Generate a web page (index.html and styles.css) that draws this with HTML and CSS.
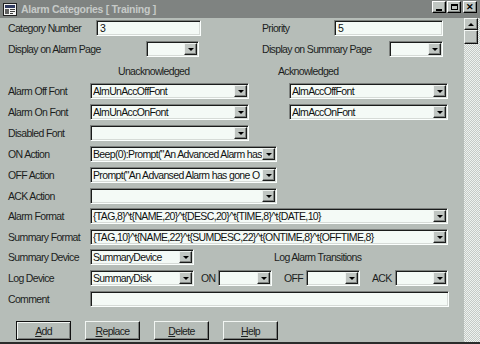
FILE: index.html
```html
<!DOCTYPE html>
<html lang="en">

<head>
  <meta charset="UTF-8" />
  <title>Alarm Categories [ Training ]</title>
  <link rel="stylesheet" href="styles.css">
</head>

<body>
  <div class="window">
    <div class="titlebar">
      <span class="app-icon">
        <svg width="14" height="13" viewBox="0 0 14 13">
          <rect x="0.5" y="0.5" width="13" height="12" fill="#f4f4f4" stroke="#202020" />
          <rect x="2" y="2" width="10" height="3" fill="#303a60" />
          <rect x="2" y="6" width="4" height="5" fill="#606060" />
          <rect x="7" y="6" width="5" height="1" fill="#404040" />
          <rect x="7" y="8" width="5" height="1" fill="#404040" />
          <rect x="7" y="10" width="3" height="1" fill="#404040" />
        </svg>
      </span>
      <span class="title">Alarm Categories [ Training ]</span>
      <div class="caption-btns">
        <span class="cbtn"><span class="min-glyph"></span></span>
        <span class="cbtn"><span class="max-glyph"></span></span>
        <span class="cbtn close">&#x2715;</span>
      </div>
    </div>

    <div class="client">
      <form class="form">
        <div class="row first">
          <span class="label w-cat">Category Number</span>
          <div class="field w105">3</div>
          <span class="label w-prio gap61">Priority</span>
          <div class="field w109">5</div>
        </div>

        <div class="row">
          <span class="label w-disp">Display on Alarm Page</span>
          <div class="combo w53"><span class="value"></span><span class="drop"></span></div>
          <span class="label w-dsum gap63">Display on Summary Page</span>
          <div class="combo w54"><span class="value"></span><span class="drop"></span></div>
        </div>

        <div class="row heads">
          <span class="head-unack">Unacknowledged</span>
          <span>Acknowledged</span>
        </div>

        <div class="row">
          <span class="label">Alarm Off Font</span>
          <div class="combo w159"><span class="value">AlmUnAccOffFont</span><span class="drop"></span></div>
          <div class="combo w159 gap40"><span class="value">AlmAccOffFont</span><span class="drop"></span></div>
        </div>

        <div class="row">
          <span class="label">Alarm On Font</span>
          <div class="combo w159"><span class="value">AlmUnAccOnFont</span><span class="drop"></span></div>
          <div class="combo w159 gap40"><span class="value">AlmAccOnFont</span><span class="drop"></span></div>
        </div>

        <div class="row">
          <span class="label">Disabled Font</span>
          <div class="combo w159"><span class="value"></span><span class="drop"></span></div>
        </div>

        <div class="row">
          <span class="label">ON Action</span>
          <div class="combo w187"><span class="value">Beep(0):Prompt("An Advanced Alarm has</span><span class="drop"></span></div>
        </div>

        <div class="row">
          <span class="label">OFF Action</span>
          <div class="combo w187"><span class="value">Prompt("An Advansed Alarm has gone O</span><span class="drop"></span></div>
        </div>

        <div class="row">
          <span class="label">ACK Action</span>
          <div class="combo w187"><span class="value"></span><span class="drop"></span></div>
        </div>

        <div class="row tight">
          <span class="label">Alarm Format</span>
          <div class="combo w358"><span class="value">{TAG,8}^t{NAME,20}^t{DESC,20}^t{TIME,8}^t{DATE,10}</span><span class="drop"></span></div>
        </div>

        <div class="row">
          <span class="label">Summary Format</span>
          <div class="combo w358"><span class="value">{TAG,10}^t{NAME,22}^t{SUMDESC,22}^t{ONTIME,8}^t{OFFTIME,8}</span><span class="drop"></span></div>
        </div>

        <div class="row tight">
          <span class="label">Summary Device</span>
          <div class="combo w104"><span class="value">SummaryDevice</span><span class="drop"></span></div>
          <span class="log-title">Log Alarm Transitions</span>
        </div>

        <div class="row">
          <span class="label">Log Device</span>
          <div class="combo w104"><span class="value">SummaryDisk</span><span class="drop"></span></div>
          <span class="small-label on">ON</span>
          <div class="combo w54"><span class="value"></span><span class="drop"></span></div>
          <span class="small-label off">OFF</span>
          <div class="combo w54"><span class="value"></span><span class="drop"></span></div>
          <span class="small-label ack">ACK</span>
          <div class="combo w53"><span class="value"></span><span class="drop"></span></div>
        </div>

        <div class="row">
          <span class="label">Comment</span>
          <div class="field w359"></div>
        </div>

        <div class="buttons">
          <button type="button" class="btn default"><u>A</u>dd</button>
          <button type="button" class="btn"><u>R</u>eplace</button>
          <button type="button" class="btn"><u>D</u>elete</button>
          <button type="button" class="btn"><u>H</u>elp</button>
        </div>
      </form>

      <div class="scrollbar">
        <div class="sb-btn"><span class="up-arrow"></span></div>
        <div class="sb-thumb"></div>
      </div>
    </div>
  </div>
</body>

</html>
```

FILE: styles.css
```css
body {
  margin: 0;
  background: #8c908d;
  font-family: "Liberation Sans", Arial, sans-serif;
  font-size: 10.5px;
  letter-spacing: -0.65px;
  color: #1c1e1d;
}

.window {
  width: 480px;
  height: 344px;
  background: #b6bdb8;
  border-bottom: 2px solid #2a2c2b;
  box-sizing: border-box;
  overflow: hidden;
}

/* title bar */
.titlebar {
  height: 18px;
  background: #7f8381;
  display: flex;
  align-items: center;
  padding-left: 3px;
}

.app-icon {
  display: flex;
  width: 14px;
  height: 13px;
}

.title {
  margin-left: 4px;
  color: #c6cac8;
  font-weight: bold;
  font-size: 10.5px;
  letter-spacing: -0.3px;
  flex: 1;
}

.caption-btns {
  display: flex;
  margin-right: 3px;
  align-self: flex-start;
  margin-top: 1px;
}

.cbtn {
  width: 14px;
  height: 12px;
  box-sizing: border-box;
  background: #c0c6c2;
  border: 1px solid;
  border-color: #fff #000 #000 #fff;
  box-shadow: inset -1px -1px #808481;
  display: flex;
  align-items: center;
  justify-content: center;
  margin-left: 1px;
}

.cbtn.close {
  margin-left: 2px;
  font-size: 9px;
  font-weight: bold;
  color: #000;
  line-height: 1;
  letter-spacing: 0;
}

.min-glyph {
  width: 6px;
  height: 2px;
  background: #000;
  margin-top: 5px;
}

.max-glyph {
  width: 7px;
  height: 6px;
  border: 1px solid #000;
  border-top-width: 2px;
  box-sizing: border-box;
}

/* client area */
.client {
  display: flex;
  height: 324px;
}

.form {
  width: 464px;
  padding-left: 8px;
  box-sizing: border-box;
}

.row {
  display: flex;
  align-items: center;
  height: 16px;
  margin-top: 5px;
}

.row.first {
  margin-top: 2px;
}

.row.tight {
  margin-top: 4px;
}

.row.heads {
  height: 14px;
  margin-top: 7px;
}

.head-unack {
  margin-left: 110px;
  width: 160px;
}

.label {
  width: 82px;
  white-space: nowrap;
}

.w-cat { width: 88px; }
.w-prio { width: 72px; }
.w-disp { width: 138px; }
.w-dsum { width: 127px; }

.gap61 { margin-left: 61px; }
.gap63 { margin-left: 63px; }
.gap40 { margin-left: 40px; }

.w53 { width: 53px; }
.w54 { width: 54px; }
.w104 { width: 104px; }
.w105 { width: 105px; }
.w109 { width: 109px; }
.w159 { width: 159px; }
.w187 { width: 187px; }
.w358 { width: 358px; }
.w359 { width: 359px; }

.field,
.combo {
  height: 16px;
  box-sizing: border-box;
  background: #f4faf6;
  border: 1px solid;
  border-color: #7c807d #fbfffd #fbfffd #7c807d;
  box-shadow: inset 1px 1px #1a1c1b, inset -1px -1px #d6dbd7;
  display: flex;
  align-items: center;
  padding-left: 2px;
  white-space: nowrap;
  overflow: hidden;
  color: #101211;
}

.field {
  padding-left: 3px;
}

.combo .value {
  flex: 1;
  overflow: hidden;
}

.combo .drop {
  width: 13px;
  height: 12px;
  margin-right: 1px;
  box-sizing: border-box;
  background: #c0c6c2;
  border: 1px solid;
  border-color: #eef2ef #1a1c1b #1a1c1b #eef2ef;
  box-shadow: inset -1px -1px #808481;
  display: flex;
  align-items: center;
  justify-content: center;
  flex-shrink: 0;
}

.combo .drop::after {
  content: "";
  border-left: 3px solid transparent;
  border-right: 3px solid transparent;
  border-top: 3px solid #000;
  margin-top: 1px;
}

.log-title {
  margin-left: 80px;
}

.small-label.on {
  width: 17px;
  margin-left: 7px;
}

.small-label.off {
  width: 22px;
  margin-left: 12px;
}

.small-label.ack {
  width: 23px;
  margin-left: 12px;
}

/* bottom buttons */
.buttons {
  display: flex;
  gap: 14px;
  margin-top: 14px;
  padding-left: 8px;
}

.btn {
  width: 55px;
  height: 19px;
  box-sizing: border-box;
  background: #b6bdb8;
  border: 1px solid;
  border-color: #f2f6f3 #111 #111 #f2f6f3;
  box-shadow: inset -1px -1px #7c807d;
  font-family: inherit;
  font-size: 10.5px;
  letter-spacing: -0.65px;
  color: #1c1e1d;
  padding: 0;
}

.btn.default {
  border-color: #111;
  box-shadow: inset 1px 1px #f2f6f3, inset -1px -1px #7c807d;
}

/* scrollbar */
.scrollbar {
  width: 16px;
  background-color: #e6ebe8;
  background-image: repeating-conic-gradient(#c4cac6 0 25%, #eef2ef 0 50%);
  background-size: 2px 2px;
}

.sb-btn,
.sb-thumb {
  width: 14px;
  box-sizing: border-box;
  background: #c0c6c2;
  border: 1px solid;
  border-color: #f2f6f3 #111 #111 #f2f6f3;
  box-shadow: inset -1px -1px #808481;
}

.sb-btn {
  height: 12px;
  display: flex;
  align-items: center;
  justify-content: center;
}

.sb-thumb {
  height: 14px;
}

.up-arrow {
  border-left: 3px solid transparent;
  border-right: 3px solid transparent;
  border-bottom: 3px solid #000;
}
```
